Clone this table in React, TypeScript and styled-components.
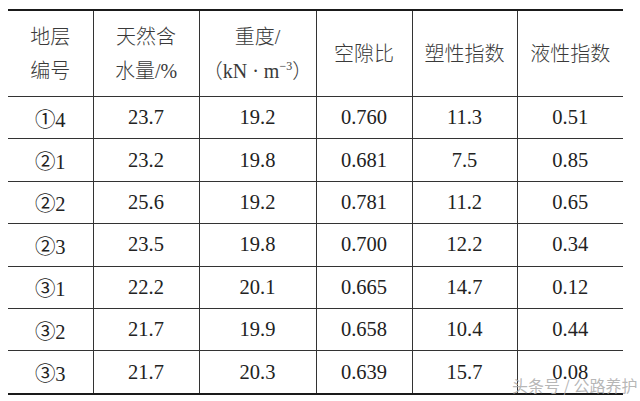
import styled, { createGlobalStyle } from "styled-components";

const GlobalStyle = createGlobalStyle`
  html, body {
    margin: 0;
    padding: 0;
    background: #ffffff;
  }
`;

const headers: string[][] = [
  ["地层", "编号"],
  ["天然含", "水量/%"],
  ["重度/", "UNIT"],
  ["空隙比"],
  ["塑性指数"],
  ["液性指数"],
];

const rows: string[][] = [
  ["①4", "23.7", "19.2", "0.760", "11.3", "0.51"],
  ["②1", "23.2", "19.8", "0.681", "7.5", "0.85"],
  ["②2", "25.6", "19.2", "0.781", "11.2", "0.65"],
  ["②3", "23.5", "19.8", "0.700", "12.2", "0.34"],
  ["③1", "22.2", "20.1", "0.665", "14.7", "0.12"],
  ["③2", "21.7", "19.9", "0.658", "10.4", "0.44"],
  ["③3", "21.7", "20.3", "0.639", "15.7", "0.08"],
];

const widths = [85, 106, 117, 96, 105, 106];

export default function App() {
  return (
    <Page>
      <GlobalStyle />
      <Table>
        <colgroup>
          {widths.map((w, i) => (
            <col key={i} style={{ width: w }} />
          ))}
        </colgroup>
        <thead>
          <tr>
            {headers.map((lines, i) => (
              <HeadCell key={i}>
                {lines.map((l, j) =>
                  l === "UNIT" ? (
                    <HeadLine key={j}>
                      （kN · m<Sup>−3</Sup>）
                    </HeadLine>
                  ) : (
                    <HeadLine key={j}>{l}</HeadLine>
                  )
                )}
              </HeadCell>
            ))}
          </tr>
        </thead>
        <tbody>
          {rows.map((r, i) => (
            <tr key={i}>
              {r.map((v, j) => (
                <Cell key={j}>{v}</Cell>
              ))}
            </tr>
          ))}
        </tbody>
      </Table>
      <Watermark>头条号 / 公路养护</Watermark>
    </Page>
  );
}

const Page = styled.div`
  position: relative;
  width: 640px;
  height: 401px;
  padding: 9px 0 0 8px;
  box-sizing: border-box;
  overflow: hidden;
`;

const Table = styled.table`
  border-collapse: collapse;
  table-layout: fixed;
  width: 615px;
  font-family: "Liberation Serif", "Noto Sans CJK SC", serif;
  color: #222;
  border-top: 2px solid #1a1a1a;
  border-bottom: 2px solid #1a1a1a;
`;

const HeadCell = styled.th`
  height: 85px;
  padding: 0;
  font-weight: 300;
  font-size: 20px;
  color: #3a3a3a;
  text-align: center;
  vertical-align: middle;
  border-left: 1px solid #333;
  border-bottom: 1px solid #333;
  &:first-child {
    border-left: none;
  }
`;

const HeadLine = styled.div`
  line-height: 34px;
  white-space: nowrap;
`;

const Sup = styled.sup`
  font-size: 12px;
  line-height: 0;
`;

const Cell = styled.td`
  height: 41.4px;
  padding: 0;
  font-size: 20.5px;
  text-align: center;
  vertical-align: middle;
  border-left: 1px solid #333;
  border-bottom: 1px solid #333;
  &:first-child {
    border-left: none;
  }
`;

const Watermark = styled.div`
  position: absolute;
  left: 512px;
  top: 375px;
  font-family: "Noto Sans CJK SC", sans-serif;
  font-size: 16px;
  line-height: 20px;
  color: rgba(170, 170, 170, 0.85);
  white-space: nowrap;
`;
